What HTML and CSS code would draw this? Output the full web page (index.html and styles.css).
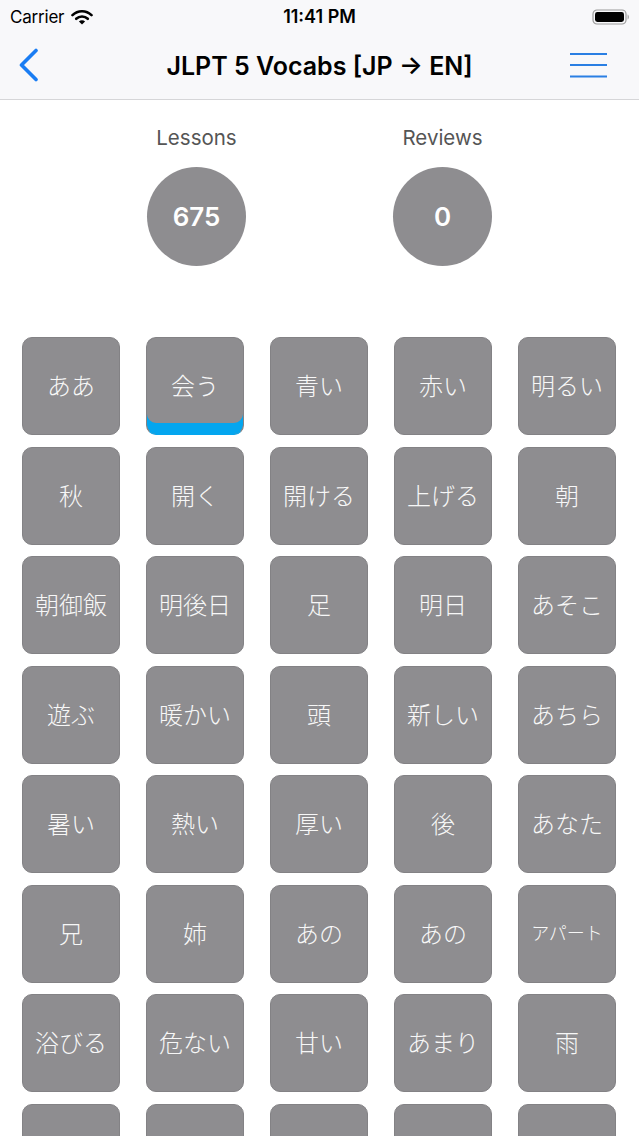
FILE: index.html
```html
<!DOCTYPE html>
<html lang="en">
<head>
    <meta charset="UTF-8">
    <meta name="viewport" content="width=device-width, initial-scale=1.0">
    <title>JLPT 5 Vocabs</title>
    <link rel="stylesheet" href="styles.css">
</head>
<body>
    <header class="top-bar">
        <div class="status-bar">
            <div class="status-left">
                <span class="carrier">Carrier</span>
                <svg class="wifi" width="22" height="16" viewBox="0 0 22 16">
                    <path d="M1.5 6.2 A13.5 13.5 0 0 1 20.5 6.2" fill="none" stroke="#000" stroke-width="2.6" stroke-linecap="round"/>
                    <path d="M5.2 9.8 A8.4 8.4 0 0 1 16.8 9.8" fill="none" stroke="#000" stroke-width="2.6" stroke-linecap="round"/>
                    <path d="M11 15.6 L7.9 12.5 A4.4 4.4 0 0 1 14.1 12.5 Z" fill="#000"/>
                </svg>
            </div>
            <span class="clock">11:41 PM</span>
            <div class="status-right">
                <svg class="battery" width="38" height="16" viewBox="0 0 38 16">
                    <rect x="1" y="1" width="33" height="14" rx="4" fill="none" stroke="#9a9a9a" stroke-width="1.2"/>
                    <rect x="3" y="3" width="29" height="10" rx="2.4" fill="#000"/>
                    <path d="M35.6 5.5 C37.2 6 37.2 10 35.6 10.5 Z" fill="#9a9a9a"/>
                </svg>
            </div>
        </div>
        <nav class="nav-bar">
            <div class="nav-left">
                <svg class="back" width="22" height="36" viewBox="0 0 22 36">
                    <path d="M18 2.5 L3.5 17 L18 31.5" fill="none" stroke="#1a7df3" stroke-width="3.6" stroke-linecap="round" stroke-linejoin="round"/>
                </svg>
            </div>
            <h1 class="title">JLPT 5 Vocabs [JP → EN]</h1>
            <div class="nav-right">
                <svg class="menu" width="38" height="26" viewBox="0 0 38 26">
                    <path d="M0 1 H37 M0 12 H37 M0 23.5 H37" stroke="#2a7fe3" stroke-width="1.8"/>
                </svg>
            </div>
        </nav>
    </header>

    <section class="stats">
        <div class="stat">
            <div class="stat-label">Lessons</div>
            <div class="stat-circle">675</div>
        </div>
        <div class="stat">
            <div class="stat-label">Reviews</div>
            <div class="stat-circle">0</div>
        </div>
    </section>

    <main class="vocab-grid">
        <div class="tile">ああ</div>
        <div class="tile tile-active">会う</div>
        <div class="tile">青い</div>
        <div class="tile">赤い</div>
        <div class="tile">明るい</div>

        <div class="tile">秋</div>
        <div class="tile">開く</div>
        <div class="tile">開ける</div>
        <div class="tile">上げる</div>
        <div class="tile">朝</div>

        <div class="tile">朝御飯</div>
        <div class="tile">明後日</div>
        <div class="tile">足</div>
        <div class="tile">明日</div>
        <div class="tile">あそこ</div>

        <div class="tile">遊ぶ</div>
        <div class="tile">暖かい</div>
        <div class="tile">頭</div>
        <div class="tile">新しい</div>
        <div class="tile">あちら</div>

        <div class="tile">暑い</div>
        <div class="tile">熱い</div>
        <div class="tile">厚い</div>
        <div class="tile">後</div>
        <div class="tile">あなた</div>

        <div class="tile">兄</div>
        <div class="tile">姉</div>
        <div class="tile">あの</div>
        <div class="tile">あの</div>
        <div class="tile tile-small">アパート</div>

        <div class="tile">浴びる</div>
        <div class="tile">危ない</div>
        <div class="tile">甘い</div>
        <div class="tile">あまり</div>
        <div class="tile">雨</div>

        <div class="tile tile-last"></div>
        <div class="tile tile-last"></div>
        <div class="tile tile-last"></div>
        <div class="tile tile-last"></div>
        <div class="tile tile-last"></div>
    </main>
</body>
</html>
```

FILE: styles.css
```css
* {
    box-sizing: border-box;
    margin: 0;
    padding: 0;
}

html,
body {
    height: 1136px;
    overflow: hidden;
}

body {
    font-family: Inter, "Liberation Sans", "Noto Sans CJK JP", sans-serif;
    background-color: #ffffff;
    color: #000;
}

/* top bar */
.top-bar {
    background-color: #f8f8fa;
    border-bottom: 1px solid #d6d6d8;
}

.status-bar {
    height: 33px;
    display: flex;
    align-items: center;
    justify-content: space-between;
    padding: 0 9px 0 10px;
    position: relative;
}

.status-left {
    display: flex;
    align-items: center;
    gap: 7px;
}

.carrier {
    font-size: 17px;
    letter-spacing: -0.2px;
}

.clock {
    font-size: 18px;
    font-weight: 600;
    position: absolute;
    left: 0;
    right: 0;
    text-align: center;
    pointer-events: none;
}

.status-right {
    display: flex;
    align-items: center;
}

.nav-bar {
    height: 66px;
    display: grid;
    grid-template-columns: 1fr auto 1fr;
    align-items: center;
    padding: 0 18px;
}

.nav-left {
    display: flex;
}

.nav-right {
    display: flex;
    justify-content: flex-end;
    padding-right: 13px;
}

.back,
.menu {
    display: block;
}

.title {
    font-size: 25px;
    font-weight: 600;
    letter-spacing: 0;
}

/* lesson / review counters */
.stats {
    display: flex;
    justify-content: center;
    padding-top: 25px;
}

.stat {
    width: 246px;
    display: flex;
    flex-direction: column;
    align-items: center;
}

.stat-label {
    font-size: 20.5px;
    color: #555;
    line-height: 26px;
    margin-bottom: 16px;
}

.stat-circle {
    width: 99px;
    height: 99px;
    border-radius: 50%;
    background-color: #8e8d90;
    color: #fff;
    font-size: 26px;
    font-weight: 600;
    display: flex;
    align-items: center;
    justify-content: center;
}

/* vocab tiles */
.vocab-grid {
    display: grid;
    grid-template-columns: repeat(5, 98px);
    grid-auto-rows: 98px;
    column-gap: 26px;
    row-gap: 11.5px;
    padding: 71px 22px 0 22px;
}

.tile {
    background-color: #8e8d90;
    border: 1px solid #838285;
    border-radius: 10px;
    color: #f7f7f7;
    font-family: "Noto Sans CJK JP", sans-serif;
    font-size: 24px;
    font-weight: 300;
    display: flex;
    align-items: center;
    justify-content: center;
    padding-bottom: 3px;
    white-space: nowrap;
}

.tile-small {
    font-size: 18px;
}

.tile-active {
    box-shadow: inset 0 -11px 0 #04a6ef;
    border-bottom-color: #04a6ef;
}
```
